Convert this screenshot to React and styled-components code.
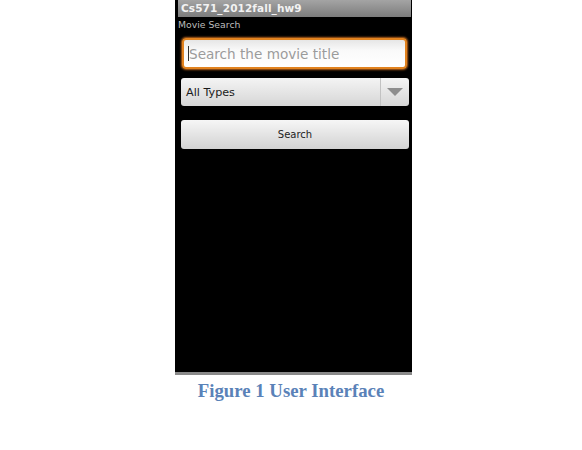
import React from 'react'
import styled, { createGlobalStyle } from 'styled-components'

const Global = createGlobalStyle`
  html, body {
    margin: 0;
    padding: 0;
    background: #ffffff;
  }
`

const Page = styled.div`
  width: 582px;
  height: 450px;
  display: flex;
  flex-direction: column;
  align-items: center;
`

const Phone = styled.div`
  width: 237px;
  height: 372px;
  margin-left: 5px;
  background: #000;
  border-bottom: 3px solid #8a8a8a;
  display: flex;
  flex-direction: column;
  font-family: "DejaVu Sans", "Liberation Sans", sans-serif;
`

const TitleBar = styled.div`
  height: 17px;
  margin: 0 1px 0 3px;
  background: linear-gradient(#a4a4a4, #7c7c7c);
  color: #f2f2f2;
  font-size: 10.5px;
  font-weight: bold;
  line-height: 17px;
  padding-left: 3px;
  letter-spacing: 0.1px;
`

const Label = styled.div`
  color: #bdbdbd;
  font-size: 9.3px;
  padding: 2px 0 0 3px;
  height: 16px;
`

const Form = styled.div`
  display: flex;
  flex-direction: column;
  padding: 0 3px 0 6px;
`

const TextBox = styled.div`
  height: 27px;
  margin: 3px 2px 0 1px;
  border: 2px solid #e2831f;
  border-radius: 4px;
  background: linear-gradient(#e6e6e6, #fafafa 40%, #ffffff);
  box-shadow: 0 0 2px 1px #b3611b;
  display: flex;
  align-items: center;
  padding-left: 4px;
  color: #9b9b9b;
  font-size: 13.6px;
  &::before {
    content: '';
    width: 1px;
    height: 15px;
    background: #333;
  }
`

const Spinner = styled.div`
  height: 28px;
  margin-top: 9px;
  border-radius: 3px;
  background: linear-gradient(#f4f4f4, #d6d6d6);
  display: flex;
  align-items: stretch;
  color: #1a1a1a;
  font-size: 11.2px;
`

const SpinnerText = styled.div`
  flex: 1;
  display: flex;
  align-items: center;
  padding-left: 5px;
`

const ArrowCell = styled.div`
  width: 28px;
  border-left: 1px solid #c2c2c2;
  display: flex;
  align-items: center;
  justify-content: center;
`

const Arrow = styled.div`
  width: 0;
  height: 0;
  border-left: 8px solid transparent;
  border-right: 8px solid transparent;
  border-top: 8px solid #8e8e8e;
`

const Button = styled.div`
  height: 29px;
  margin-top: 14px;
  border-radius: 3px;
  background: linear-gradient(#f6f6f6, #d2d2d2);
  display: flex;
  align-items: center;
  justify-content: center;
  color: #222;
  font-size: 10px;
`

const Caption = styled.div`
  margin-top: 5px;
  font-family: "Liberation Serif", "DejaVu Serif", serif;
  font-weight: bold;
  font-size: 18.8px;
  color: #5a82b8;
`

export default function App() {
  return (
    <>
      <Global />
      <Page>
        <Phone>
          <TitleBar>Cs571_2012fall_hw9</TitleBar>
          <Label>Movie Search</Label>
          <Form>
            <TextBox>Search the movie title</TextBox>
            <Spinner>
              <SpinnerText>All Types</SpinnerText>
              <ArrowCell>
                <Arrow />
              </ArrowCell>
            </Spinner>
            <Button>Search</Button>
          </Form>
        </Phone>
        <Caption>Figure 1 User Interface</Caption>
      </Page>
    </>
  )
}
